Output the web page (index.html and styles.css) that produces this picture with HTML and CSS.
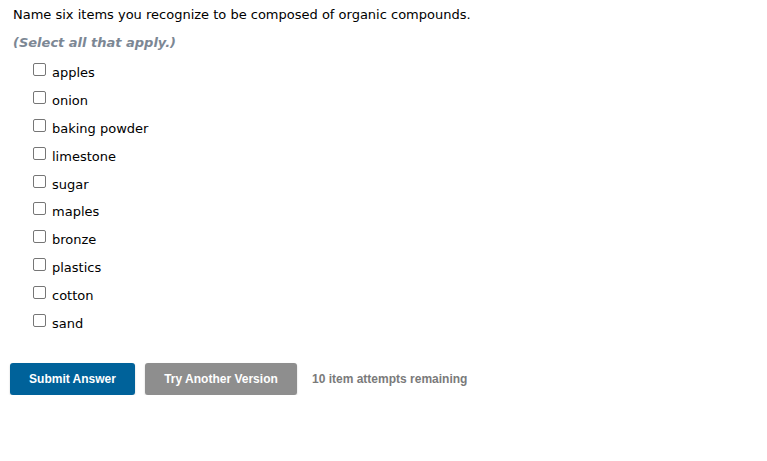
FILE: index.html
```html
<!DOCTYPE html>
<html lang="en">
<head>
  <meta charset="UTF-8">
  <title>Question</title>
  <link rel="stylesheet" href="styles.css">
</head>
<body>
  <div class="question">
    <p class="prompt">Name six items you recognize to be composed of organic compounds.</p>
    <p class="hint">(Select all that apply.)</p>

    <!-- Choices -->
    <ul class="choices">
      <li><label><input type="checkbox"> apples</label></li>
      <li><label><input type="checkbox"> onion</label></li>
      <li><label><input type="checkbox"> baking powder</label></li>
      <li><label><input type="checkbox"> limestone</label></li>
      <li><label><input type="checkbox"> sugar</label></li>
      <li><label><input type="checkbox"> maples</label></li>
      <li><label><input type="checkbox"> bronze</label></li>
      <li><label><input type="checkbox"> plastics</label></li>
      <li><label><input type="checkbox"> cotton</label></li>
      <li><label><input type="checkbox"> sand</label></li>
    </ul>

    <!-- Actions -->
    <div class="actions">
      <button type="button" class="btn btn-submit">Submit Answer</button>
      <button type="button" class="btn btn-retry">Try Another Version</button>
      <span class="attempts">10 item attempts remaining</span>
    </div>
  </div>
</body>
</html>
```

FILE: styles.css
```css
* {
  margin: 0;
  padding: 0;
  box-sizing: border-box;
}

body {
  font-family: 'DejaVu Sans', Verdana, sans-serif;
  font-size: 13px;
  color: #000;
  background: #fff;
}

.question {
  padding: 7px 0 0 13px;
}

.prompt {
  line-height: 16px;
}

.hint {
  margin-top: 12px;
  line-height: 16px;
  font-weight: bold;
  font-style: italic;
  color: #7c8794;
}

/* Choices */
.choices {
  list-style: none;
  margin-top: 8px;
  padding-left: 20px;
}

.choices li {
  height: 27.8px;
  display: flex;
  align-items: center;
}

.choices label {
  display: flex;
  align-items: center;
  gap: 6px;
}

.choices input {
  appearance: none;
  width: 13px;
  height: 13px;
  border: 1px solid #767676;
  border-radius: 2px;
  background: #fff;
  margin-top: -6px;
}

/* Buttons */
.actions {
  display: flex;
  align-items: center;
  margin: 26px 0 0 -3px;
}

.btn {
  font-family: 'Liberation Sans', Arial, sans-serif;
  font-weight: bold;
  font-size: 12px;
  color: #fff;
  border: none;
  border-radius: 3px;
  height: 32px;
  cursor: pointer;
  box-shadow: 0 1px 2px rgba(0, 0, 0, 0.2);
}

.btn-submit {
  background: #00629a;
  width: 125px;
}

.btn-retry {
  background: #8e8e8e;
  width: 152px;
  margin-left: 10px;
}

.attempts {
  font-family: 'Liberation Sans', Arial, sans-serif;
  font-weight: bold;
  font-size: 12px;
  color: #7a7a7a;
  margin-left: 15px;
}
```
